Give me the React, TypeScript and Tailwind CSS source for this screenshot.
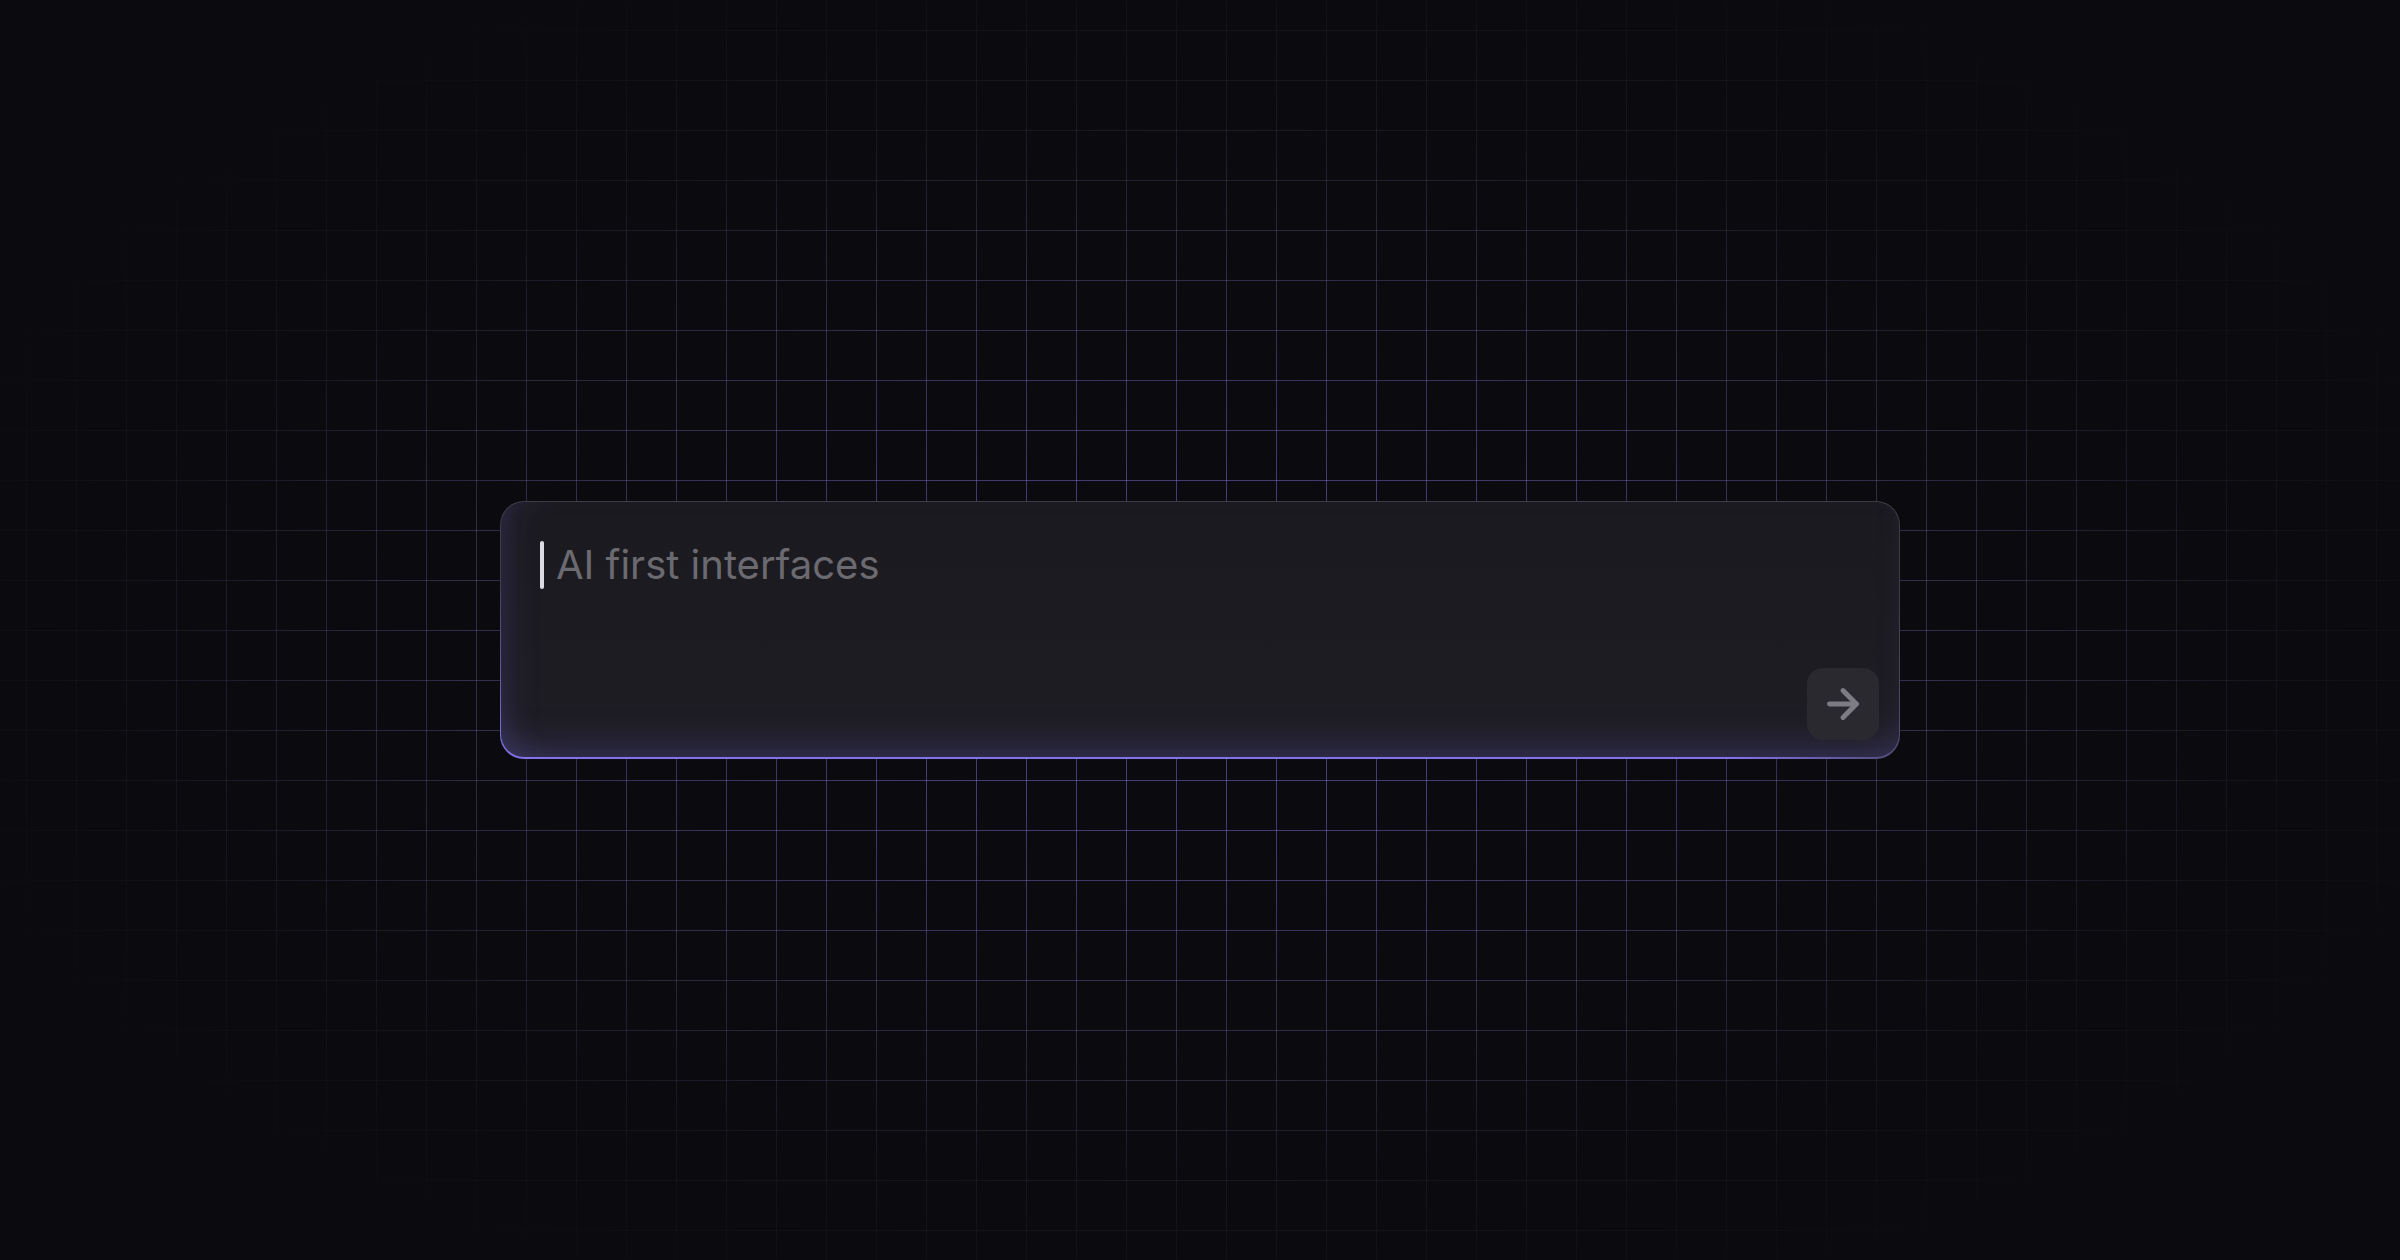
import { ArrowRight } from "lucide-react";

const PLACEHOLDER = "AI first interfaces";

function GridBackdrop() {
  return (
    <div className="pointer-events-none absolute inset-0">
      {/* faint neutral grid, fades out toward the viewport edges */}
      <div className="absolute inset-0 bg-[linear-gradient(to_right,rgba(255,255,255,0.085)_1px,transparent_1px),linear-gradient(to_bottom,rgba(255,255,255,0.085)_1px,transparent_1px)] bg-[size:50px_50px] bg-[position:26px_30px] [mask-image:radial-gradient(ellipse_56%_60%_at_50%_50%,black_55%,transparent_100%)] [-webkit-mask-image:radial-gradient(ellipse_56%_60%_at_50%_50%,black_55%,transparent_100%)]" />
      {/* violet tint concentrated around the prompt box */}
      <div className="absolute inset-0 bg-[linear-gradient(to_right,rgba(125,110,245,0.4)_1px,transparent_1px),linear-gradient(to_bottom,rgba(125,110,245,0.4)_1px,transparent_1px)] bg-[size:50px_50px] bg-[position:26px_30px] [mask-image:radial-gradient(ellipse_1100px_540px_at_50%_52%,black_30%,transparent_100%)] [-webkit-mask-image:radial-gradient(ellipse_1100px_540px_at_50%_52%,black_30%,transparent_100%)]" />
    </div>
  );
}

function PromptBox() {
  return (
    <div className="w-[1400px] h-[258px] rounded-3xl p-px pb-[2px] bg-[linear-gradient(to_left,rgba(60,59,66,0.7),transparent_12%),linear-gradient(to_bottom,#3d3c43_28%,#8173ea_100%)]">
      <div className="h-full w-full rounded-[23px] bg-[linear-gradient(to_bottom,#1b1a1f,#1e1d24)] shadow-[inset_0_-26px_40px_-22px_rgba(124,110,230,0.3),inset_26px_0_40px_-26px_rgba(124,110,230,0.2)] p-5 pb-[17px] flex flex-col">
        <div className="flex items-center gap-3 pl-[19px] pt-[19px]">
          <span className="block w-1 h-12 rounded-full bg-[#dcdbe3]" />
          <span className="text-[40px] leading-12 text-[#6b6a71] font-['Inter','Liberation_Sans',sans-serif]">
            {PLACEHOLDER}
          </span>
        </div>
        <div className="flex-1" />
        <div className="flex justify-end">
          <button
            type="button"
            className="size-[72px] rounded-2xl bg-[#2a292f] flex items-center justify-center text-[#7d7c84]"
          >
            <ArrowRight size={46} strokeWidth={2.6} />
          </button>
        </div>
      </div>
    </div>
  );
}

export default function App() {
  return (
    <div className="relative h-screen w-full overflow-hidden bg-[#0a0a0f]">
      <GridBackdrop />
      <div className="relative flex h-full w-full items-center justify-center">
        <PromptBox />
      </div>
    </div>
  );
}
